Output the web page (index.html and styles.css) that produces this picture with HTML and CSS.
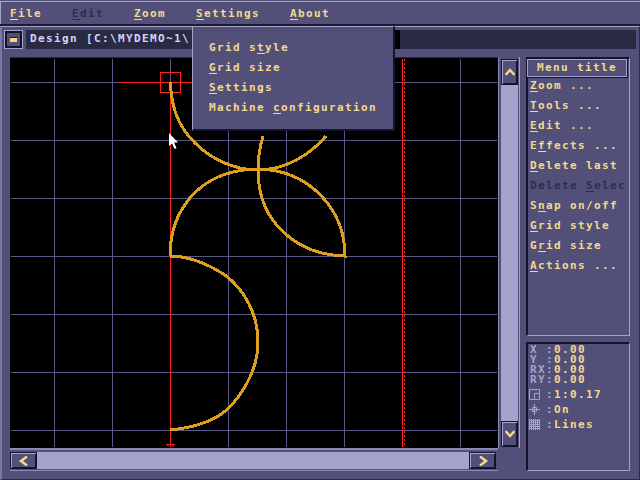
FILE: index.html
```html
<!DOCTYPE html>
<html lang="en">
<head>
    <meta charset="UTF-8">
    <title>Design</title>
    <link rel="stylesheet" href="styles.css">
</head>
<body>
    <div class="app">
        <div class="menubar">
            <span class="menu-item m-file"><u>F</u>ile</span>
            <span class="menu-item m-edit disabled"><u>E</u>dit</span>
            <span class="menu-item m-zoom"><u>Z</u>oom</span>
            <span class="menu-item m-settings"><u>S</u>ettings</span>
            <span class="menu-item"><u>A</u>bout</span>
        </div>

        <div class="window">
            <div class="title-row">
                <div class="sys-button"><span class="sys-glyph"></span></div>
                <div class="title-field">Design [C:\MYDEMO~1\</div>
                <div class="title-gap"></div>
                <div class="title-rest"></div>
            </div>

            <div class="workspace">
                <div class="left-col">
                    <svg class="canvas" width="488" height="390" viewBox="10 58 488 390">
                        <g class="grid">
                            <path d="M54.5 59V447M112.5 59V447M170.5 59V447M228.5 59V447M286.5 59V447M344.5 59V447M402.5 59V447M460.5 59V447"/>
                            <path d="M11 82.5H497M11 140.5H497M11 198.5H497M11 256.5H497M11 314.5H497M11 372.5H497M11 430.5H497"/>
                        </g>
                        <g class="guides">
                            <path d="M120 82.5H300M170.5 82V444M402.5 59V447"/>
                            <path class="dotted" d="M404.5 59V447"/>
                            <rect x="160.5" y="72.5" width="20" height="20"/>
                            <path d="M166 444.5H175M168 445V447M173 445V447"/>
                        </g>
                        <g class="curves">
                            <path d="M170.5 82 C171 110 180 128 195 143 C212 160 235 170 258 170 C285 170 310 155 326 136"/>
                            <path d="M170 256 C170 215 195 170 258 169 C310 170 345 210 345 256 C300 255 258 225 258 170 C258 158 260 146 263 136"/>
                            <path d="M170 256 C180 256 200 259 225 275 C245 290 258 315 258 342 C258 375 236 404 220 415 C206 424 190 428 170 430"/>
                        </g>
                        <path class="pointer" d="M169 133V146L172 143.5L174.5 149L176.5 148L174 142.5H178Z"/>
                    </svg>
                    <div class="hscroll">
                        <div class="scroll-btn wide">
                            <svg width="12" height="10" viewBox="0 0 12 10"><path d="M9 0.5L3 5L9 9.5" class="chevron"/></svg>
                        </div>
                        <div class="track"></div>
                        <div class="scroll-btn wide">
                            <svg width="12" height="10" viewBox="0 0 12 10"><path d="M3 0.5L9 5L3 9.5" class="chevron"/></svg>
                        </div>
                    </div>
                </div>

                <div class="vscroll">
                    <div class="scroll-btn tall">
                        <svg width="10" height="8" viewBox="0 0 10 8"><path d="M0.5 7L5 2L9.5 7" class="chevron"/></svg>
                    </div>
                    <div class="track"></div>
                    <div class="scroll-btn tall">
                        <svg width="10" height="8" viewBox="0 0 10 8"><path d="M0.5 1L5 6L9.5 1" class="chevron"/></svg>
                    </div>
                </div>

                <div class="side-col">
                    <div class="panel side-menu">
                        <div class="menu-title">Menu title</div>
                        <div class="side-item"><u>Z</u>oom ...</div>
                        <div class="side-item"><u>T</u>ools ...</div>
                        <div class="side-item"><u>E</u>dit ...</div>
                        <div class="side-item">E<u>f</u>fects ...</div>
                        <div class="side-item"><u>D</u>elete last</div>
                        <div class="side-item disabled">Delete <u>S</u>elec</div>
                        <div class="side-item">S<u>n</u>ap on/off</div>
                        <div class="side-item"><u>G</u>rid style</div>
                        <div class="side-item">G<u>r</u>id size</div>
                        <div class="side-item"><u>A</u>ctions ...</div>
                    </div>
                    <div class="panel status">
                        <div class="stat"><span class="stat-label">X&nbsp;:</span><span>0.00</span></div>
                        <div class="stat"><span class="stat-label">Y&nbsp;:</span><span>0.00</span></div>
                        <div class="stat"><span class="stat-label">RX:</span><span>0.00</span></div>
                        <div class="stat"><span class="stat-label">RY:</span><span>0.00</span></div>
                        <div class="stat icon-stat first">
                            <svg class="stat-icon" width="12" height="12" viewBox="0 0 12 12"><path d="M0.5 0.5H10.5V10.5H0.5ZM10.5 4.5H5.5V10.5"/></svg>
                            <span class="stat-label">:</span><span>1:0.17</span>
                        </div>
                        <div class="stat icon-stat">
                            <svg class="stat-icon" width="12" height="12" viewBox="0 0 12 12"><path d="M0 5.5H11M5.5 0V11M3.5 3.5H7.5V7.5H3.5Z"/></svg>
                            <span class="stat-label">:</span><span>On</span>
                        </div>
                        <div class="stat icon-stat">
                            <svg class="stat-icon" width="12" height="12" viewBox="0 0 12 12"><rect class="dots-bg" x="0" y="0" width="11" height="11"/><path class="dots" d="M1.5 0V11M3.5 0V11M5.5 0V11M7.5 0V11M9.5 0V11"/></svg>
                            <span class="stat-label">:</span><span>Lines</span>
                        </div>
                    </div>
                </div>
            </div>
        </div>

        <div class="dropdown">
            <div class="drop-item">Grid s<u>t</u>yle</div>
            <div class="drop-item"><u>G</u>rid size</div>
            <div class="drop-item"><u>S</u>ettings</div>
            <div class="drop-item">Machine <u>c</u>onfiguration</div>
        </div>
    </div>
</body>
</html>
```

FILE: styles.css
```css
* {
    box-sizing: border-box;
}
body {
    margin: 0;
    background: #000;
}
.app {
    position: relative;
    width: 640px;
    height: 480px;
    overflow: hidden;
    background: #525078;
    color: #f4d88e;
    font-family: "DejaVu Sans Mono", monospace;
    font-size: 11px;
    font-weight: bold;
    letter-spacing: 1.38px;
    line-height: 16px;
    white-space: nowrap;
}
u {
    text-underline-offset: 2px;
    text-decoration-thickness: 1px;
}
.disabled {
    color: #2e2e4c;
}

/* top menu */
.menubar {
    display: flex;
    height: 26px;
    padding: 5px 0 0 10px;
    border-top: 1px solid #525078;
    box-shadow: inset 0 1px 0 #a5a3cc, inset 1px 0 0 #a5a3cc;
    border-bottom: 2px solid #1c1c30;
}
.menu-item {
    margin-right: 30px;
}
.m-zoom, .m-file, .m-edit {
    width: 32px;
}

/* main window */
.window {
    height: 454px;
    padding: 3px 3px 0 2px;
    border-top: 1px solid #a5a3cc;
    border-left: 2px solid #7a78a4;
    border-right: 1px solid #2a2a42;
    border-bottom: 1px solid #2a2a42;
}
.title-row {
    display: flex;
    height: 19px;
}
.sys-button {
    display: flex;
    align-items: center;
    justify-content: center;
    width: 19px;
    background: #525078;
    border: 1px solid #a5a3cc;
    box-shadow: inset 0 0 0 2px #14142a;
}
.sys-glyph {
    width: 7px;
    height: 5px;
    background: #f4d88e;
    border-top: 1px solid #14142a;
}
.title-field {
    width: 369px;
    margin-left: 3px;
    padding: 1px 0 0 4px;
    background: #2a2a42;
    color: #d4d4fa;
    overflow: hidden;
}
.title-gap {
    width: 5px;
    background: #000;
}
.title-rest {
    flex: 1;
    background: #2a2a42;
}
.workspace {
    display: flex;
    margin-top: 8px;
    margin-left: 6px;
    height: 415px;
}
.left-col {
    display: flex;
    flex-direction: column;
    flex: none;
    width: 488px;
    border-top: 1px solid #2a2a42;
}
.canvas {
    display: block;
    background: #000;
}
.grid path {
    stroke: #5a5888;
    stroke-width: 1;
    fill: none;
}
.guides path, .guides rect {
    stroke: #ff2020;
    stroke-width: 1;
    fill: none;
}
.guides .dotted {
    stroke-dasharray: 2 2;
}
.curves path {
    stroke: #dca01e;
    stroke-width: 3;
    fill: none;
    shape-rendering: crispEdges;
}
.pointer {
    fill: #fff;
}

/* scrollbars */
.hscroll {
    display: flex;
    height: 23px;
    padding: 2px 2px 1px 0;
    border-top: 2px solid #8a88b4;
    border-bottom: 1px solid #8a88b4;
}
.vscroll {
    display: flex;
    flex-direction: column;
    flex: none;
    width: 22px;
    height: 391px;
    padding: 2px 1px 1px 2px;
    border-left: 1px solid #8a88b4;
    border-right: 1px solid #a5a3cc;
}
.track {
    flex: 1;
    background: #a5a3cc;
}
.scroll-btn {
    display: flex;
    align-items: center;
    justify-content: center;
    flex: none;
    background: #525078;
    border: 1px solid #14142a;
    box-shadow: inset 1px 1px 0 #a5a3cc, inset -1px -1px 0 #14142a;
}
.scroll-btn.wide {
    width: 27px;
}
.scroll-btn.tall {
    height: 26px;
}
.chevron {
    stroke: #f4d88e;
    stroke-width: 2.5;
    fill: none;
}

/* right column */
.side-col {
    display: flex;
    flex-direction: column;
    gap: 6px;
    flex: none;
    width: 104px;
    margin-left: 6px;
}
.panel {
    background: #525078;
    border-top: 2px solid #14142a;
    border-left: 2px solid #14142a;
    border-right: 1px solid #a5a3cc;
    border-bottom: 1px solid #a5a3cc;
}
.side-menu {
    height: 279px;
}
.menu-title {
    height: 18px;
    margin: 0 2px 0 -1px;
    text-align: center;
    line-height: 15px;
    border: 1px solid #a5a3cc;
    outline: 1px solid #14142a;
}
.side-item {
    height: 20px;
    padding: 1px 0 0 2px;
    overflow: hidden;
}
.status {
    height: 129px;
    padding: 1px 0 0 2px;
}
.stat {
    display: flex;
    align-items: center;
    height: 10px;
    line-height: 10px;
}
.icon-stat {
    height: 15px;
    line-height: 15px;
}
.first {
    margin-top: 2px;
}
.stat-label {
    color: #a5a3cc;
}
.stat-icon {
    margin: 0 5px 0 -1px;
    stroke: #a5a3cc;
    stroke-width: 1;
    fill: none;
    flex: none;
}
.stat-icon .dots {
    stroke: #525078;
    stroke-dasharray: 1 1;
}
.stat-icon .dots-bg {
    fill: #a5a3cc;
    stroke: none;
}

/* open Settings menu */
.dropdown {
    position: absolute;
    left: 192px;
    top: 26px;
    width: 203px;
    height: 105px;
    padding: 13px 0 0 16px;
    background: #525078;
    border-left: 1px solid #a5a3cc;
    border-right: 2px solid #14142a;
    border-bottom: 2px solid #14142a;
    border-top: 1px solid #a5a3cc;
}
.drop-item {
    height: 20px;
}
```
